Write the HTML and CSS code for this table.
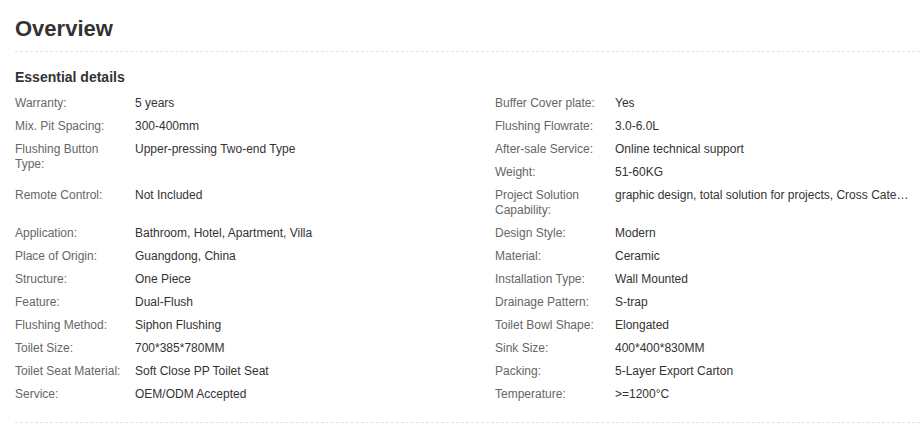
FILE: index.html
```html
<!DOCTYPE html>
<html lang="en">
<head>
<meta charset="utf-8">
<title>Overview</title>
<link rel="stylesheet" href="styles.css">
</head>
<body>
<div class="page">
  <h1 class="title">Overview</h1>
  <section class="details">
    <h2 class="subtitle">Essential details</h2>
    <div class="grid">
      <div class="item"><div class="name">Warranty:</div><div class="value">5 years</div></div>
      <div class="item"><div class="name">Buffer Cover plate:</div><div class="value">Yes</div></div>
      <div class="item"><div class="name">Mix. Pit Spacing:</div><div class="value">300-400mm</div></div>
      <div class="item"><div class="name">Flushing Flowrate:</div><div class="value">3.0-6.0L</div></div>
      <div class="item span2"><div class="name">Flushing Button Type:</div><div class="value">Upper-pressing Two-end Type</div></div>
      <div class="item"><div class="name">After-sale Service:</div><div class="value">Online technical support</div></div>
      <div class="item"><div class="name">Weight:</div><div class="value">51-60KG</div></div>
      <div class="item"><div class="name">Remote Control:</div><div class="value">Not Included</div></div>
      <div class="item"><div class="name">Project Solution Capability:</div><div class="value">graphic design, total solution for projects, Cross Categories Consolidation</div></div>
      <div class="item"><div class="name">Application:</div><div class="value">Bathroom, Hotel, Apartment, Villa</div></div>
      <div class="item"><div class="name">Design Style:</div><div class="value">Modern</div></div>
      <div class="item"><div class="name">Place of Origin:</div><div class="value">Guangdong, China</div></div>
      <div class="item"><div class="name">Material:</div><div class="value">Ceramic</div></div>
      <div class="item"><div class="name">Structure:</div><div class="value">One Piece</div></div>
      <div class="item"><div class="name">Installation Type:</div><div class="value">Wall Mounted</div></div>
      <div class="item"><div class="name">Feature:</div><div class="value">Dual-Flush</div></div>
      <div class="item"><div class="name">Drainage Pattern:</div><div class="value">S-trap</div></div>
      <div class="item"><div class="name">Flushing Method:</div><div class="value">Siphon Flushing</div></div>
      <div class="item"><div class="name">Toilet Bowl Shape:</div><div class="value">Elongated</div></div>
      <div class="item"><div class="name">Toilet Size:</div><div class="value">700*385*780MM</div></div>
      <div class="item"><div class="name">Sink Size:</div><div class="value">400*400*830MM</div></div>
      <div class="item"><div class="name">Toilet Seat Material:</div><div class="value">Soft Close PP Toilet Seat</div></div>
      <div class="item"><div class="name">Packing:</div><div class="value">5-Layer Export Carton</div></div>
      <div class="item"><div class="name">Service:</div><div class="value">OEM/ODM Accepted</div></div>
      <div class="item"><div class="name">Temperature:</div><div class="value">&gt;=1200°C</div></div>
    </div>
  </section>
</div>
</body>
</html>
```
FILE: styles.css
```css
html, body {
  margin: 0;
  padding: 0;
  background: #fff;
}
body {
  font-family: "Liberation Sans", Arial, sans-serif;
  color: #333;
}
.page {
  width: 905px;
  padding: 0 3px 0 15px;
}
.title {
  margin: 16px 0 0;
  padding-bottom: 9px;
  font-size: 22px;
  line-height: 26px;
  font-weight: bold;
  color: #333;
  border-bottom: 1px dashed #e3e3e3;
}
.details {
  padding-bottom: 12px;
  border-bottom: 1px dashed #e3e3e3;
}
.subtitle {
  margin: 15px 0 9px;
  font-size: 14px;
  line-height: 20px;
  font-weight: bold;
  color: #333;
}
.grid {
  display: grid;
  grid-template-columns: 480px 425px;
  grid-auto-rows: auto;
  font-size: 12px;
  line-height: 15px;
}
.item {
  display: flex;
  min-width: 0;
  padding-bottom: 8px;
}
.span2 {
  grid-row: span 2;
}
.name {
  flex: 0 0 120px;
  box-sizing: border-box;
  padding-right: 10px;
  color: #666;
}
.value {
  flex: 1 1 auto;
  min-width: 0;
  padding-right: 8px;
  color: #333;
  white-space: nowrap;
  overflow: hidden;
  text-overflow: ellipsis;
}
```
